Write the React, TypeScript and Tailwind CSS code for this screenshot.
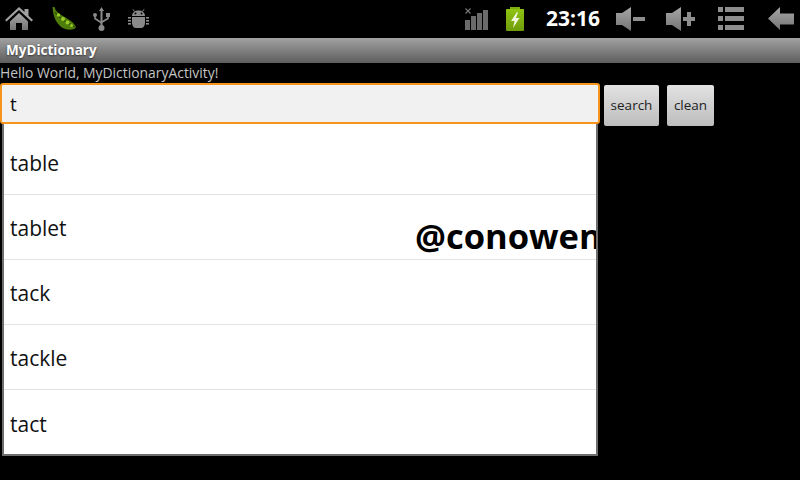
const droid = "font-['Open_Sans','Noto_Sans',sans-serif]"

const words = ["table", "tablet", "tack", "tackle", "tact"]

function GrayGrad({ id }: { id: string }) {
	return (
		<defs>
			<linearGradient id={id} x1="0" y1="0" x2="0" y2="1">
				<stop offset="0" stopColor="#a6a6a6" />
				<stop offset="1" stopColor="#757575" />
			</linearGradient>
		</defs>
	)
}

function HomeIcon() {
	return (
		<svg width="28" height="23" viewBox="0 0 28 23">
			<GrayGrad id="home" />
			<path d="M14 0 L0 13 L1.5 14.5 L14 3 L26.5 14.5 L28 13 L23.5 8.8 V2 H19.5 V5 Z" fill="#a0a0a0" />
			<path d="M5 14.5 L14 6 L23 14.5 V23 H17 V16 H11 V23 H5 Z" fill="url(#home)" />
		</svg>
	)
}

function PeaIcon() {
	return (
		<svg width="24" height="23" viewBox="0 0 24 23">
			<path d="M0.5 0 L2.5 0 C3.5 4 6 6 10 8.5 C15 11.5 21 14 24 20 C23 23 17 23.5 12 21.5 C5 18.5 1 10 0.5 0 Z" fill="#4f7d0c" />
			<path d="M3 5 C6 10 10 12 14 15 C17 17 20 18 23 20" stroke="#2c5006" strokeWidth="1.2" fill="none" />
			<circle cx="6.5" cy="8" r="1.7" fill="#9acb26" />
			<circle cx="11" cy="12" r="2" fill="#9acb26" />
			<circle cx="15.5" cy="15.5" r="2" fill="#9acb26" />
			<circle cx="19.5" cy="18.5" r="1.5" fill="#9acb26" />
		</svg>
	)
}

function UsbIcon() {
	return (
		<svg width="17" height="24" viewBox="0 0 17 24" fill="#8a8a8a">
			<path d="M8.5 0 L11 4 H9.5 V19 H7.5 V4 H6 Z" />
			<circle cx="8.5" cy="21" r="3" />
			<circle cx="2" cy="8" r="2" />
			<path d="M1.2 9 H2.8 V11 L8 14.5 V16.5 L1.2 12 Z" />
			<rect x="13" y="6" width="4" height="4" />
			<path d="M14.2 9 H15.8 V12 L9 16 V14 L14.2 11 Z" />
		</svg>
	)
}

function AndroidIcon() {
	return (
		<svg width="21" height="19" viewBox="0 0 21 19" fill="#8a8a8a">
			<path d="M6.5 2.5 L5 0.3 M14.5 2.5 L16 0.3" stroke="#8a8a8a" strokeWidth="1" />
			<path d="M4 7 C4 3.5 7 1.5 10.5 1.5 C14 1.5 17 3.5 17 7 Z" />
			<circle cx="7.5" cy="4.5" r="1" fill="#000" />
			<circle cx="13.5" cy="4.5" r="1" fill="#000" />
			<path d="M4 8 H17 V14 C17 17 15 19 13 19 H8 C6 19 4 17 4 14 Z" />
			<rect x="0" y="8" width="3" height="1.6" />
			<rect x="0" y="11" width="3" height="1.6" />
			<rect x="0" y="14" width="3" height="1.6" />
			<rect x="18" y="8" width="3" height="1.6" />
			<rect x="18" y="11" width="3" height="1.6" />
			<rect x="18" y="14" width="3" height="1.6" />
		</svg>
	)
}

function SignalIcon() {
	return (
		<svg width="24" height="22" viewBox="0 0 24 22">
			<path d="M0.5 0.5 L5.5 5.5 M5.5 0.5 L0.5 5.5" stroke="#777" strokeWidth="1.1" />
			<rect x="0" y="12" width="5" height="10" fill="#6a6a6a" />
			<rect x="6" y="8" width="5" height="14" fill="#6a6a6a" />
			<rect x="12" y="5" width="5" height="17" fill="#6a6a6a" />
			<rect x="18" y="2" width="5" height="20" fill="#6a6a6a" />
		</svg>
	)
}

function BatteryIcon() {
	return (
		<svg width="18" height="24" viewBox="0 0 18 24">
			<defs>
				<linearGradient id="batt" x1="0" y1="0" x2="0" y2="1">
					<stop offset="0" stopColor="#8fc411" />
					<stop offset="1" stopColor="#6f9c0c" />
				</linearGradient>
			</defs>
			<rect x="4" y="0" width="10" height="3" fill="#7fae10" />
			<rect x="0" y="2" width="18" height="22" rx="1" fill="url(#batt)" />
			<path d="M11 5 L5 14 H8.5 L7 21 L13.5 11 H10 L12 5 Z" fill="#f1f7dc" />
		</svg>
	)
}

function VolumeIcon({ plus }: { plus?: boolean }) {
	const id = plus ? "volup" : "voldown"
	return (
		<svg width="29" height="24" viewBox="0 0 29 24" fill={`url(#${id})`}>
			<GrayGrad id={id} />
			<path d="M0 6 H6 L15 0 V24 L6 18 H0 Z" />
			<rect x="17" y="10" width="12" height="4" fill="#8e8e8e" />
			{plus && <rect x="21" y="5" width="4" height="14" fill="#8e8e8e" />}
		</svg>
	)
}

function MenuIcon() {
	return (
		<svg width="26" height="23" viewBox="0 0 26 23" fill="#8e8e8e">
			<rect x="0" y="0" width="5" height="5" />
			<rect x="7" y="0" width="19" height="5" />
			<rect x="0" y="9" width="5" height="5" />
			<rect x="7" y="9" width="19" height="5" />
			<rect x="0" y="18" width="5" height="5" />
			<rect x="7" y="18" width="19" height="5" />
		</svg>
	)
}

function BackIcon() {
	return (
		<svg width="26" height="23" viewBox="0 0 26 23" fill="url(#back)">
			<GrayGrad id="back" />
			<path d="M0 11.5 L12 0 V6.5 H26 V17.5 H12 V23 Z" />
		</svg>
	)
}

export default function App() {
	return (
		<div className={`${droid} w-[800px] h-[480px] bg-black overflow-hidden`}>
			<div className="h-[38px] flex items-center justify-between pb-[1px]">
				<div className="flex items-center">
					<div className="ml-[5px] flex"><HomeIcon /></div>
					<div className="ml-[19px] flex"><PeaIcon /></div>
					<div className="ml-[17px] flex"><UsbIcon /></div>
					<div className="ml-[18px] flex"><AndroidIcon /></div>
				</div>
				<div className="flex items-center">
					<SignalIcon />
					<div className="ml-[17px] flex"><BatteryIcon /></div>
					<span className="ml-[22px] w-[54px] text-[21px] leading-none font-bold text-white whitespace-nowrap">23:16</span>
					<div className="ml-[16px] flex"><VolumeIcon /></div>
					<div className="ml-[21px] flex"><VolumeIcon plus /></div>
					<div className="ml-[23px] flex"><MenuIcon /></div>
					<div className="ml-[24px] mr-[6px] flex"><BackIcon /></div>
				</div>
			</div>
			<div className="h-[25px] bg-gradient-to-b from-[#a2a2a2] to-[#5e5e5e] flex items-center pl-[6px]">
				<span className="text-[13.5px] font-bold text-white [text-shadow:0_1px_2px_#333]">MyDictionary</span>
			</div>
			<div className="h-[20px] text-[13.9px] leading-[20px] text-[#c4c4c4] whitespace-nowrap">
				Hello World, MyDictionaryActivity!
			</div>
			<div className="flex items-start h-[41px]">
				<div className="w-[600px] h-[41px] bg-[#f1f1f1] border-2 border-[#f7941e] rounded-[3px] flex items-center pl-[8px] pt-[2px] text-[19px] text-[#111]">
					t
				</div>
				<button type="button" className="ml-[4px] mt-[2px] w-[55px] h-[41px] bg-gradient-to-b from-[#e2e2e2] to-[#bdbdbd] rounded-[2px] text-[13.5px] text-[#222]">
					search
				</button>
				<button type="button" className="ml-[8px] mt-[2px] w-[47px] h-[41px] bg-gradient-to-b from-[#e2e2e2] to-[#bdbdbd] rounded-[2px] text-[13.5px] text-[#222]">
					clean
				</button>
			</div>
			<div className="relative ml-[2px] w-[596px] h-[332px] bg-white border-2 border-t-0 border-[#6e6e6e] pt-[6px] overflow-hidden">
				{words.map((word, i) => (
					<div
						key={word}
						className={`h-[65px] flex items-center pl-[6px] pt-[4px] text-[21px] text-[#111] ${i < words.length - 1 ? "border-b border-[#e2e2e2]" : ""}`}
					>
						{word}
					</div>
				))}
				<span className="absolute left-[411px] top-[87px] text-[34.5px] leading-[50px] font-bold text-black whitespace-nowrap">
					@conowen
				</span>
			</div>
		</div>
	)
}
